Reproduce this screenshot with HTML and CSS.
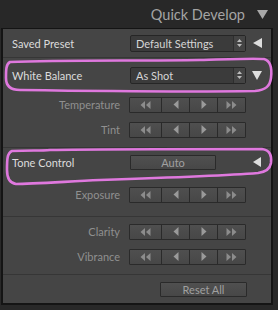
FILE: index.html
```html
<!DOCTYPE html>
<html>
<head>
<meta charset="utf-8">
<link rel="stylesheet" href="styles.css">
</head>
<body>
<div class="page">
  <div class="header">
    <span class="title">Quick Develop</span>
    <svg class="head-tri" width="11" height="10" viewBox="0 0 11 10"><polygon points="0,0 11,0 5.5,9" fill="#a8a8a8"/></svg>
  </div>
  <div class="panel">
    <div class="section s1">
      <div class="row main">
        <span class="label">Saved Preset</span>
        <div class="select"><span>Default Settings</span><span class="spin"><svg width="7" height="10" viewBox="0 0 7 10"><polygon points="3.5,1 6,4 1,4" fill="#bbb"/><polygon points="1,6 6,6 3.5,9" fill="#bbb"/></svg></span></div>
        <svg class="tri" width="9" height="10" viewBox="0 0 9 10"><polygon points="9,0 9,10 0,5" fill="#dedede"/></svg>
      </div>
    </div>
    <div class="section s2">
      <div class="row main wb">
        <span class="label">White Balance</span>
        <div class="select"><span>As Shot</span><span class="spin"><svg width="7" height="10" viewBox="0 0 7 10"><polygon points="3.5,1 6,4 1,4" fill="#bbb"/><polygon points="1,6 6,6 3.5,9" fill="#bbb"/></svg></span></div>
        <svg class="tri" width="10" height="9" viewBox="0 0 10 9"><polygon points="0,0 10,0 5,9" fill="#dedede"/></svg>
      </div>
      <div class="row sub">
        <span class="sublabel">Temperature</span>
        <div class="group">
          <span class="seg w1"><svg width="11" height="8" viewBox="0 0 11 8"><polygon points="5,0 5,8 0.5,4" fill="#8c8c8c"/><polygon points="10.5,0 10.5,8 6,4" fill="#8c8c8c"/></svg></span>
          <span class="seg w2"><svg width="6" height="9" viewBox="0 0 6 9"><polygon points="5.5,0 5.5,9 0.5,4.5" fill="#9a9a9a"/></svg></span>
          <span class="seg w3"><svg width="6" height="9" viewBox="0 0 6 9"><polygon points="0.5,0 0.5,9 5.5,4.5" fill="#9a9a9a"/></svg></span>
          <span class="seg w4"><svg width="11" height="8" viewBox="0 0 11 8"><polygon points="0.5,0 0.5,8 5,4" fill="#8c8c8c"/><polygon points="6,0 6,8 10.5,4" fill="#8c8c8c"/></svg></span>
        </div>
      </div>
      <div class="row sub">
        <span class="sublabel">Tint</span>
        <div class="group">
          <span class="seg w1"><svg width="11" height="8" viewBox="0 0 11 8"><polygon points="5,0 5,8 0.5,4" fill="#8c8c8c"/><polygon points="10.5,0 10.5,8 6,4" fill="#8c8c8c"/></svg></span>
          <span class="seg w2"><svg width="6" height="9" viewBox="0 0 6 9"><polygon points="5.5,0 5.5,9 0.5,4.5" fill="#9a9a9a"/></svg></span>
          <span class="seg w3"><svg width="6" height="9" viewBox="0 0 6 9"><polygon points="0.5,0 0.5,9 5.5,4.5" fill="#9a9a9a"/></svg></span>
          <span class="seg w4"><svg width="11" height="8" viewBox="0 0 11 8"><polygon points="0.5,0 0.5,8 5,4" fill="#8c8c8c"/><polygon points="6,0 6,8 10.5,4" fill="#8c8c8c"/></svg></span>
        </div>
      </div>
    </div>
    <div class="section s3">
      <div class="row main tone">
        <span class="label">Tone Control</span>
        <div class="ctl-left"><span class="btn auto">Auto</span></div>
        <svg class="tri" width="8" height="10" viewBox="0 0 8 10"><polygon points="8,0 8,10 0,5" fill="#dedede"/></svg>
      </div>
      <div class="row sub">
        <span class="sublabel">Exposure</span>
        <div class="group">
          <span class="seg w1"><svg width="11" height="8" viewBox="0 0 11 8"><polygon points="5,0 5,8 0.5,4" fill="#8c8c8c"/><polygon points="10.5,0 10.5,8 6,4" fill="#8c8c8c"/></svg></span>
          <span class="seg w2"><svg width="6" height="9" viewBox="0 0 6 9"><polygon points="5.5,0 5.5,9 0.5,4.5" fill="#9a9a9a"/></svg></span>
          <span class="seg w3"><svg width="6" height="9" viewBox="0 0 6 9"><polygon points="0.5,0 0.5,9 5.5,4.5" fill="#9a9a9a"/></svg></span>
          <span class="seg w4"><svg width="11" height="8" viewBox="0 0 11 8"><polygon points="0.5,0 0.5,8 5,4" fill="#8c8c8c"/><polygon points="6,0 6,8 10.5,4" fill="#8c8c8c"/></svg></span>
        </div>
      </div>
    </div>
    <div class="section s4">
      <div class="row sub">
        <span class="sublabel">Clarity</span>
        <div class="group">
          <span class="seg w1"><svg width="11" height="8" viewBox="0 0 11 8"><polygon points="5,0 5,8 0.5,4" fill="#8c8c8c"/><polygon points="10.5,0 10.5,8 6,4" fill="#8c8c8c"/></svg></span>
          <span class="seg w2"><svg width="6" height="9" viewBox="0 0 6 9"><polygon points="5.5,0 5.5,9 0.5,4.5" fill="#9a9a9a"/></svg></span>
          <span class="seg w3"><svg width="6" height="9" viewBox="0 0 6 9"><polygon points="0.5,0 0.5,9 5.5,4.5" fill="#9a9a9a"/></svg></span>
          <span class="seg w4"><svg width="11" height="8" viewBox="0 0 11 8"><polygon points="0.5,0 0.5,8 5,4" fill="#8c8c8c"/><polygon points="6,0 6,8 10.5,4" fill="#8c8c8c"/></svg></span>
        </div>
      </div>
      <div class="row sub">
        <span class="sublabel">Vibrance</span>
        <div class="group">
          <span class="seg w1"><svg width="11" height="8" viewBox="0 0 11 8"><polygon points="5,0 5,8 0.5,4" fill="#8c8c8c"/><polygon points="10.5,0 10.5,8 6,4" fill="#8c8c8c"/></svg></span>
          <span class="seg w2"><svg width="6" height="9" viewBox="0 0 6 9"><polygon points="5.5,0 5.5,9 0.5,4.5" fill="#9a9a9a"/></svg></span>
          <span class="seg w3"><svg width="6" height="9" viewBox="0 0 6 9"><polygon points="0.5,0 0.5,9 5.5,4.5" fill="#9a9a9a"/></svg></span>
          <span class="seg w4"><svg width="11" height="8" viewBox="0 0 11 8"><polygon points="0.5,0 0.5,8 5,4" fill="#8c8c8c"/><polygon points="6,0 6,8 10.5,4" fill="#8c8c8c"/></svg></span>
        </div>
      </div>
    </div>
    <div class="section s5">
      <div class="row main reset">
        <span class="label"></span>
        <div class="ctl-right"><span class="btn resetbtn">Reset All</span></div>
      </div>
    </div>
  </div>
  <svg class="marks" width="278" height="310" viewBox="0 0 278 310">
    <path d="M10,62 C60,60 140,61 200,60 C230,59 255,58 264,59 C271,61 272,70 271,78 C270,86 266,90 255,91 C190,92 90,91 20,90 C10,90 6,86 6,78 C6,70 6,64 10,62 Z" fill="none" stroke="#df78de" stroke-width="2.6"/>
    <path d="M12,151 C30,150 40,151 50,150 C100,149 200,149 262,149 C270,150 272,156 271,163 C270,169 266,172 258,173 C220,176 160,178 100,180 C60,182 30,184 16,184 C9,183 7,178 7,170 C7,160 7,153 12,151 Z" fill="none" stroke="#df78de" stroke-width="2.6"/>
  </svg>
</div>
</body>
</html>
```

FILE: styles.css
```css
* { box-sizing: border-box; }
html, body { margin: 0; padding: 0; }
body {
  background: #282828;
  font-family: "Lato", "Open Sans", sans-serif;
  width: 278px;
  height: 310px;
  overflow: hidden;
}
.page { position: relative; width: 278px; height: 310px; }
.header {
  height: 28px;
  display: flex;
  justify-content: flex-end;
  align-items: center;
  padding-right: 10px;
  gap: 12px;
}
.title {
  color: #a4a4a4;
  font-size: 14.5px;
  padding-top: 1px;
}
.head-tri { margin-top: 1px; }
.panel {
  margin-left: 1px;
  width: 272px;
  height: 277px;
  border: 2px solid #141414;
  border-top-width: 1px;
  background: #454545;
}
.section { border-top: 1px solid #363636; }
.s1 { border-top: 0; height: 28px; }
.s2 { height: 90px; }
.s3 { height: 69px; }
.s4 { height: 58px; padding-top: 2px; }
.s5 { height: 28px; }
.row {
  display: grid;
  grid-template-columns: 1fr 116px 25px;
  padding-left: 9px;
  align-items: center;
}
.main { height: 28px; }
.wb { height: 34px; }
.tone { height: 28px; margin-bottom: 6px; }
.reset { height: 28px; }
.sub { height: 25px; }
.label {
  color: #dcdcdc;
  font-size: 11px;
  padding-right: 9px;
}
.sublabel {
  color: #909090;
  font-size: 11px;
  text-align: right;
  padding-right: 10px;
}
.select {
  height: 17px;
  background: #3b3b3b;
  border: 1px solid #262626;
  border-radius: 2px;
  display: flex;
  align-items: center;
  justify-content: space-between;
  color: #d6d6d6;
  font-size: 11px;
  padding-left: 5px;
}
.spin {
  width: 12px;
  height: 15px;
  display: flex;
  align-items: center;
  justify-content: center;
  border-left: 1px solid #2e2e2e;
  background: #444;
}
.tri { justify-self: center; margin-right: 3px; }
.group {
  display: flex;
  height: 16px;
  margin-left: -1px;
  border: 1px solid #2a2a2a;
  border-radius: 1px;
}
.seg {
  display: flex;
  align-items: center;
  justify-content: center;
  background: linear-gradient(#4f4f4f, #474747);
  border-left: 1px solid #2a2a2a;
}
.seg:first-child { border-left: 0; }
.w1 { width: 31px; }
.w2 { width: 28px; }
.w3 { width: 28px; }
.w4 { flex: 1; }
.ctl-left { display: flex; }
.ctl-right { display: flex; justify-content: flex-end; grid-column: 2 / 4; padding-right: 24px; }
.btn {
  display: flex;
  align-items: center;
  justify-content: center;
  height: 15px;
  background: linear-gradient(#505050, #474747);
  border: 1px solid #2a2a2a;
  border-radius: 1px;
  color: #a0a0a0;
  font-size: 11px;
}
.auto { width: 86px; }
.resetbtn { width: 87px; }
.marks { position: absolute; left: 0; top: 0; pointer-events: none; }
```
